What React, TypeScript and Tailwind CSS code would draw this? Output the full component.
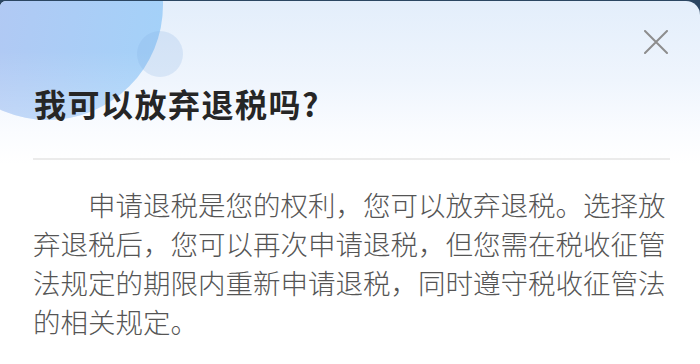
import React from "react";

export default function App() {
  const lines = [
    "申请退税是您的权利，您可以放弃退税。选择放",
    "弃退税后，您可以再次申请退税，但您需在税收征管",
    "法规定的期限内重新申请退税，同时遵守税收征管法",
    "的相关规定。",
  ];
  return (
    <div className="w-[700px] h-[364px] bg-[#2b4662] pt-px overflow-hidden">
      <div
        className="relative h-[363px] overflow-hidden rounded-tl-[6px] rounded-tr-[14px] bg-[linear-gradient(180deg,#e3eefb_0%,#eff5fd_22%,#fafcff_36%,#ffffff_45%)]"
        style={{ fontFamily: '"Noto Sans CJK SC", "Noto Sans", sans-serif' }}
      >
        {/* decorative circles */}
        <div className="absolute left-[-67px] top-[-111px] w-[230px] h-[230px] rounded-full bg-[linear-gradient(100deg,#b8c5f1_0%,#aecbf5_45%,#a3d2f9_100%)]" />
        <div className="absolute left-[-67px] top-[-111px] w-[230px] h-[230px] rounded-full bg-[linear-gradient(180deg,rgba(255,255,255,0)_70%,rgba(255,255,255,0.25)_100%)]" />
        <div className="absolute left-[137px] top-[30px] w-[46px] h-[46px] rounded-full bg-[rgba(127,168,224,0.2)]" />

        <div className="relative flex flex-col pl-[33px] pr-[30px]">
          <div className="flex justify-end pt-[29px]">
            <svg width="24" height="24" viewBox="0 0 24 24" className="mr-[2px]">
              <path d="M1 1 L23 23 M23 1 L1 23" stroke="#8d8d8d" strokeWidth="2" strokeLinecap="round" fill="none" />
            </svg>
          </div>
          <div className="mt-[29px] pl-px text-[32px] leading-[40px] font-bold tracking-[1.5px] text-[#262626]">
            我可以放弃退税吗?
          </div>
          <div className="mt-[35px] h-[2px] bg-[#ebebeb]" />
          <div className="mt-[25px] text-[27.5px] leading-[39px] font-light text-[#555555]">
            {lines.map((l, i) => (
              <div key={i} className={i === 0 ? "whitespace-nowrap pl-[55px]" : "whitespace-nowrap"}>
                {l}
              </div>
            ))}
          </div>
        </div>
      </div>
    </div>
  );
}
